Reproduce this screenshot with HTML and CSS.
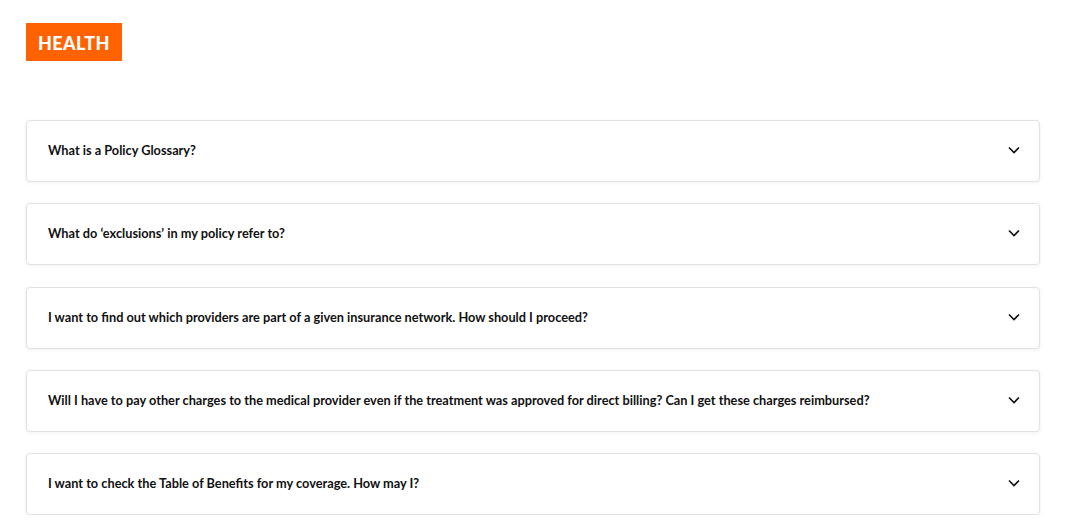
FILE: index.html
```html
<!DOCTYPE html>
<html lang="en">

<head>
    <meta charset="UTF-8">
    <meta name="viewport" content="width=device-width, initial-scale=1.0">
    <title>Health FAQ</title>
    <link rel="stylesheet" href="styles.css">
</head>

<body>
    <div class="page">
        <div class="tag">HEALTH</div>

        <div class="faq-list">
            <div class="faq-item">
                <span class="faq-question">What is a Policy Glossary?</span>
                <svg class="chevron" viewBox="0 0 12 8" width="12" height="8"><path d="M1 1.5l5 5 5-5" /></svg>
            </div>
            <div class="faq-item">
                <span class="faq-question">What do ‘exclusions’ in my policy refer to?</span>
                <svg class="chevron" viewBox="0 0 12 8" width="12" height="8"><path d="M1 1.5l5 5 5-5" /></svg>
            </div>
            <div class="faq-item">
                <span class="faq-question">I want to find out which providers are part of a given insurance network. How should I proceed?</span>
                <svg class="chevron" viewBox="0 0 12 8" width="12" height="8"><path d="M1 1.5l5 5 5-5" /></svg>
            </div>
            <div class="faq-item">
                <span class="faq-question">Will I have to pay other charges to the medical provider even if the treatment was approved for direct billing? Can I get these charges reimbursed?</span>
                <svg class="chevron" viewBox="0 0 12 8" width="12" height="8"><path d="M1 1.5l5 5 5-5" /></svg>
            </div>
            <div class="faq-item">
                <span class="faq-question">I want to check the Table of Benefits for my coverage. How may I?</span>
                <svg class="chevron" viewBox="0 0 12 8" width="12" height="8"><path d="M1 1.5l5 5 5-5" /></svg>
            </div>
        </div>
    </div>
</body>

</html>
```

FILE: styles.css
```css
body {
    margin: 0;
    background: #fff;
    font-family: "Lato", "Noto Sans", sans-serif;
    color: #111;
}

.page {
    padding: 23px 37px 0 26px;
}

.tag {
    display: inline-block;
    width: 96px;
    height: 38px;
    line-height: 40px;
    text-align: center;
    background: #ff6200;
    color: #fff;
    font-weight: 900;
    font-size: 18px;
    letter-spacing: 0.4px;
}

.faq-list {
    display: flex;
    flex-direction: column;
    gap: 21.25px;
    margin-top: 59px;
}

.faq-item {
    display: flex;
    align-items: center;
    justify-content: space-between;
    height: 58px;
    padding: 0 19px 2px 21px;
    border: 1px solid #e2e2e2;
    border-radius: 4px;
    box-shadow: 0 1px 4px rgba(0, 0, 0, 0.06);
    background: #fff;
}

.faq-question {
    font-size: 12.75px;
    font-weight: 700;
}

.chevron {
    fill: none;
    stroke: #111;
    stroke-width: 1.6;
}
```
